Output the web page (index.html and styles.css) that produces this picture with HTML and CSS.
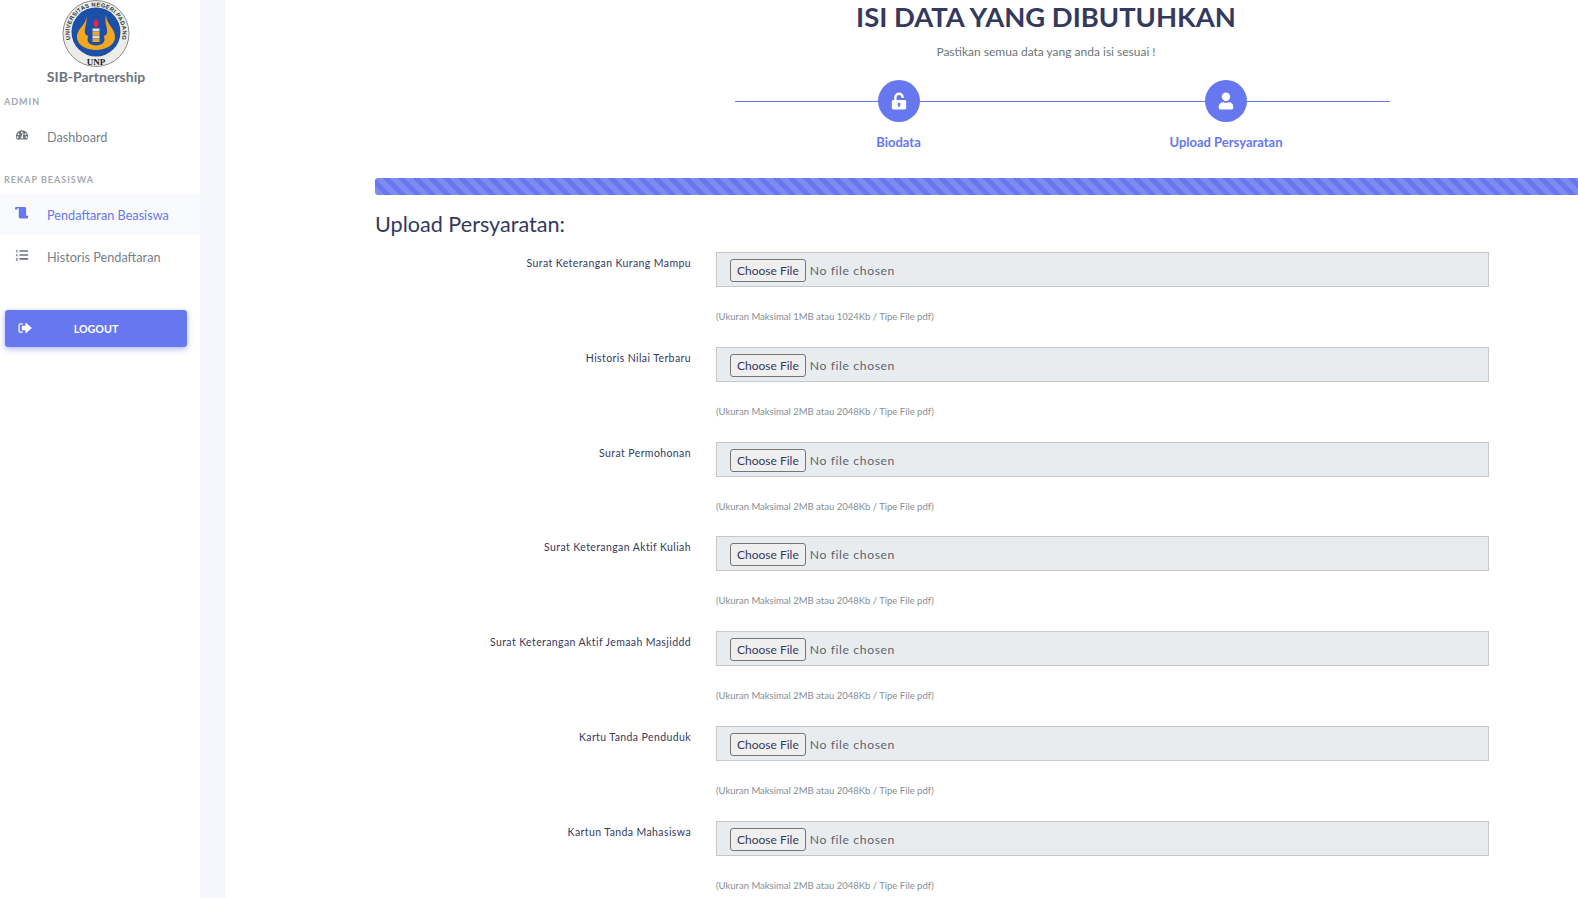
FILE: index.html
```html
<!DOCTYPE html>
<html lang="en">
<head>
    <meta charset="UTF-8">
    <title>SIB-Partnership</title>
    <link rel="stylesheet" href="styles.css">
</head>
<body>
<aside class="sidebar">
    <div class="brand">
        <svg class="logo" viewBox="0 0 68 68">
            <defs>
                <path id="ring" d="M13.700 50 A26.500 26.500 0 1 1 54.300 50"/>
            </defs>
            <circle cx="34" cy="33.500" r="33" fill="#ECECE8" stroke="#8A8A8A" stroke-width="1"/>
            <text class="logo-ring"><textPath href="#ring" startOffset="50%" text-anchor="middle">UNIVERSITAS NEGERI PADANG</textPath></text>
            <text class="logo-unp" x="34" y="65" text-anchor="middle">UNP</text>
            <circle cx="34" cy="32" r="24.500" fill="#1C4FA8"/>
            <path d="M24 15 C26 24 15 28 15 37 C15 46 26 50 34 50 C42 50 53 46 53 37 C53 28 44 24 44 15 C42 22 46 28 45 33 C44 37 40 36 39 34 L29 34 C28 36 24 37 23 33 C22 28 26 22 24 15 Z" fill="#F2A71E"/>
            <path d="M28 33 C24 38 24 45 34 45.500 C44 45 44 38 40 33 Z" fill="#1C4FA8"/>
            <path d="M34 19 C37 22 38 25 34 27.500 C30 25 31 22 34 19 Z" fill="#E8264A"/>
            <rect x="30.500" y="28.500" width="7" height="3" fill="#E9E0C0"/>
            <rect x="30.500" y="32" width="7" height="3" fill="#F2A71E"/>
            <rect x="30.500" y="35.500" width="7" height="3" fill="#E9E0C0"/>
            <rect x="30.500" y="39" width="7" height="3" fill="#F2A71E"/>
        </svg>
        <div class="brand-name">SIB-Partnership</div>
    </div>

    <div class="menu-header menu-header-first">ADMIN</div>
    <a class="menu-item" href="#">
        <svg class="menu-icon" viewBox="0 0 16 16"><path fill="#6C757D" fill-rule="evenodd" d="M8 2.500A7 7 0 0 0 1 9.500c0 1.300.3 2.300 1 3.300.2.300.4.400.7.400h10.600c.3 0 .5-.1.700-.4.700-1 1-2 1-3.300a7 7 0 0 0-7-7zM8 4a1 1 0 1 1 0 2 1 1 0 0 1 0-2zM4 6a1 1 0 1 1 0 2 1 1 0 0 1 0-2zm8 0a1 1 0 1 1 0 2 1 1 0 0 1 0-2zM3 9.500a1 1 0 1 1 0 2 1 1 0 0 1 0-2zm10 0a1 1 0 1 1 0 2 1 1 0 0 1 0-2zM9.800 6 8.900 9.700a1.400 1.400 0 1 1-1.300-.2L8.700 5.800z"/></svg>
        <span>Dashboard</span>
    </a>

    <div class="menu-header">REKAP BEASISWA</div>
    <a class="menu-item active" href="#">
        <svg class="menu-icon" viewBox="0 0 16 16"><path fill="#6777EF" d="M0 2.500C0 1.700.6 1 1.400 1H11c1 0 1.700.8 1.700 1.700V11h1.800c.3 0 .5.200.5.500v1c0 1-.8 1.700-1.700 1.700H6c-1 0-1.700-.8-1.700-1.700V3c0-.5-.4-.8-.8-.8-.4 0-.8.300-.8.800v1H0z"/></svg>
        <span>Pendaftaran Beasiswa</span>
    </a>
    <a class="menu-item" href="#">
        <svg class="menu-icon" viewBox="0 0 16 16"><path fill="#6C757D" d="M5 2.500h10v1.800H5zM5 7h10v1.800H5zM5 11.500h10v1.800H5zM1.500 2h1.200v3H1.500zM1 7h2v.8l-1 .9h1v.8H1v-.8l1-.9H1zM1 11.500h2v3H1v-.7h1.200v-.4H1.500v-.7h.7v-.4H1z"/></svg>
        <span>Historis Pendaftaran</span>
    </a>

    <a class="logout" href="#">
        <svg class="logout-icon" viewBox="0 0 16 16"><path fill="#FFFFFF" d="M5.500 2.500H3A2.500 2.500 0 0 0 .5 5v6A2.500 2.500 0 0 0 3 13.500h2.500V12H3a1 1 0 0 1-1-1V5a1 1 0 0 1 1-1h2.500zM9.500 2.200c-.4-.3-1-.1-1 .5V5.500H5c-.4 0-.6.3-.6.600v3.800c0 .3.200.6.600.6h3.500v2.800c0 .6.600.8 1 .5L15.500 8.400c.2-.2.200-.6 0-.8z"/></svg>
        <span>LOGOUT</span>
    </a>
</aside>
<div class="gutter"></div>

<main class="content">
    <h1 class="title">ISI DATA YANG DIBUTUHKAN</h1>
    <p class="subtitle">Pastikan semua data yang anda isi sesuai !</p>

    <div class="steps">
        <div class="step">
            <div class="step-circle">
                <svg viewBox="0 0 16 16"><path fill="#FFFFFF" fill-rule="evenodd" d="M8 .5A4.300 4.300 0 0 0 3.700 4.800V7H3c-.8 0-1.400.6-1.400 1.400v5.700C1.600 14.900 2.200 15.500 3 15.500h10c.8 0 1.400-.6 1.400-1.400V8.400C14.400 7.600 13.800 7 13 7H5.800V4.800a2.200 2.200 0 0 1 4.400 0v.6h2.100v-.6A4.300 4.300 0 0 0 8 .5zM8 9.500a1.300 1.300 0 0 1 .7 2.400v1.400H7.300v-1.400A1.300 1.300 0 0 1 8 9.500z"/></svg>
            </div>
            <div class="step-label">Biodata</div>
        </div>
        <div class="step">
            <div class="step-circle">
                <svg viewBox="0 0 16 16"><path fill="#FFFFFF" d="M8 8a3.700 3.700 0 1 0 0-7.500A3.700 3.700 0 0 0 8 8zm2.600 1h-.5a5 5 0 0 1-4.200 0h-.5A3.900 3.900 0 0 0 1.500 12.900v1.200c0 .8.600 1.400 1.400 1.400h10.200c.8 0 1.400-.6 1.400-1.400v-1.200A3.900 3.900 0 0 0 10.600 9z"/></svg>
            </div>
            <div class="step-label">Upload Persyaratan</div>
        </div>
    </div>

    <div class="progress"></div>

    <h2 class="form-title">Upload Persyaratan:</h2>

    <div class="form-list">
        <div class="form-row">
            <label class="form-label">Surat Keterangan Kurang Mampu</label>
            <div>
                <input class="file-input" type="file">
                <small class="hint">(Ukuran Maksimal 1MB atau 1024Kb / Tipe File pdf)</small>
            </div>
        </div>
        <div class="form-row">
            <label class="form-label">Historis Nilai Terbaru</label>
            <div>
                <input class="file-input" type="file">
                <small class="hint">(Ukuran Maksimal 2MB atau 2048Kb / Tipe File pdf)</small>
            </div>
        </div>
        <div class="form-row">
            <label class="form-label">Surat Permohonan</label>
            <div>
                <input class="file-input" type="file">
                <small class="hint">(Ukuran Maksimal 2MB atau 2048Kb / Tipe File pdf)</small>
            </div>
        </div>
        <div class="form-row">
            <label class="form-label">Surat Keterangan Aktif Kuliah</label>
            <div>
                <input class="file-input" type="file">
                <small class="hint">(Ukuran Maksimal 2MB atau 2048Kb / Tipe File pdf)</small>
            </div>
        </div>
        <div class="form-row">
            <label class="form-label">Surat Keterangan Aktif Jemaah Masjiddd</label>
            <div>
                <input class="file-input" type="file">
                <small class="hint">(Ukuran Maksimal 2MB atau 2048Kb / Tipe File pdf)</small>
            </div>
        </div>
        <div class="form-row">
            <label class="form-label">Kartu Tanda Penduduk</label>
            <div>
                <input class="file-input" type="file">
                <small class="hint">(Ukuran Maksimal 2MB atau 2048Kb / Tipe File pdf)</small>
            </div>
        </div>
        <div class="form-row">
            <label class="form-label">Kartun Tanda Mahasiswa</label>
            <div>
                <input class="file-input" type="file">
                <small class="hint">(Ukuran Maksimal 2MB atau 2048Kb / Tipe File pdf)</small>
            </div>
        </div>
    </div>
</main>
</body>
</html>
```

FILE: styles.css
```css
html, body {
    height: 898px;
    overflow: hidden;
}

body {
    margin: 0;
    display: flex;
    font-family: "Lato", "Noto Sans", sans-serif;
    background-color: #FFFFFF;
    color: #34395E;
}

a {
    text-decoration: none;
}

.sidebar {
    flex: 0 0 200px;
    display: flex;
    flex-direction: column;
}

.gutter {
    flex: 0 0 25px;
    background-color: #F4F6FB;
}

.brand {
    display: flex;
    flex-direction: column;
    align-items: center;
    width: 192px;
    height: 94px;
}

.logo {
    display: block;
    width: 68px;
    height: 68px;
}

.logo-ring {
    font-family: "Liberation Sans", sans-serif;
    font-size: 5.800px;
    font-weight: 700;
    letter-spacing: 0.3px;
    fill: #333333;
}

.logo-unp {
    font-family: "Liberation Serif", serif;
    font-size: 9px;
    font-weight: 700;
    fill: #222222;
}

.brand-name {
    margin-top: -1px;
    font-size: 14px;
    font-weight: 700;
    line-height: 20px;
    color: #6C757D;
}

.menu-header {
    height: 15px;
    padding-left: 4px;
    font-size: 9px;
    font-weight: 700;
    line-height: 15px;
    letter-spacing: 1px;
    color: #A1A8AE;
}

.menu-header-first {
    margin-bottom: 7px;
}

.menu-item {
    display: flex;
    align-items: center;
    height: 41px;
    padding-left: 15px;
    font-size: 12.700px;
    color: #78828A;
}

.menu-item.active {
    background-color: #F8FAFD;
    color: #6777EF;
}

.menu-header + .menu-item.active {
    margin-top: 7px;
}

.menu-item + .menu-header {
    margin-top: 15px;
}

.menu-item + .menu-item {
    margin-top: 1px;
}

.menu-icon {
    width: 14px;
    height: 14px;
    margin-right: 18px;
    margin-bottom: 3px;
}

.logout {
    display: flex;
    align-items: center;
    position: relative;
    justify-content: center;
    width: 182px;
    height: 37px;
    margin: 33px 0 0 5px;
    background-color: #6777EF;
    border-radius: 3px;
    box-shadow: 0 2px 6px #ACB5F6;
    font-size: 10.700px;
    font-weight: 700;
    color: #FFFFFF;
}

.logout-icon {
    position: absolute;
    left: 13px;
    top: 11px;
    width: 14px;
    height: 14px;
}

.content {
    flex: 1;
    min-width: 0;
    overflow: hidden;
    padding-left: 150px;
}

.title {
    width: 1342px;
    margin: 1px 0 0;
    font-size: 27.400px;
    font-weight: 700;
    line-height: 32px;
    text-align: center;
}

.subtitle {
    width: 1342px;
    margin: 10px 0 0;
    font-size: 12px;
    line-height: 18px;
    text-align: center;
    color: #6C757D;
}

.steps {
    display: grid;
    grid-template-columns: 327px 328px;
    width: 655px;
    margin: 19px 0 0 360px;
    background: linear-gradient(#6777EF, #6777EF) 0 21px / 100% 1px no-repeat;
}

.step {
    display: flex;
    flex-direction: column;
    align-items: center;
}

.step-circle {
    display: flex;
    align-items: center;
    justify-content: center;
    width: 42px;
    height: 42px;
    background-color: #6777EF;
    border-radius: 50%;
}

.step-circle svg {
    width: 18px;
    height: 18px;
}

.step-label {
    margin-top: 10px;
    font-size: 13px;
    font-weight: 700;
    line-height: 20px;
    color: #6777EF;
}

.progress {
    width: 1342px;
    height: 17px;
    margin-top: 26px;
    border-radius: 3px 0 0 3px;
    background-color: #6777EF;
    background-image: linear-gradient(45deg, rgba(255,255,255,.15) 25%, transparent 25%, transparent 50%, rgba(255,255,255,.15) 50%, rgba(255,255,255,.15) 75%, transparent 75%, transparent);
    background-size: 15px 15px;
}

.form-title {
    margin: 14px 0 0;
    font-size: 21.600px;
    font-weight: 400;
    line-height: 30px;
}

.form-list {
    margin-top: 13px;
}

.form-row {
    display: grid;
    grid-template-columns: 316px 773px;
    column-gap: 25px;
    height: 94.800px;
}

.form-label {
    padding-top: 1px;
    font-size: 10.500px;
    line-height: 20px;
    letter-spacing: 0.4px;
    text-align: right;
}

.file-input {
    display: block;
    box-sizing: border-box;
    width: 773px;
    height: 35px;
    padding: 6px 13px;
    background-color: #E9ECEF;
    border: 1px solid #C8C8C8;
    font-family: inherit;
    font-size: 12.200px;
    letter-spacing: 0.6px;
    color: #5A6570;
}

.file-input::file-selector-button {
    height: 23px;
    margin-right: 4px;
    padding: 0 6px;
    background-color: #EFEFEF;
    border: 1px solid #767676;
    border-radius: 3px;
    font-family: inherit;
    font-size: 12px;
    letter-spacing: 0;
    color: #34395E;
}

.hint {
    display: block;
    margin-top: 22px;
    font-size: 9.500px;
    line-height: 16px;
    color: #868E96;
}
```
